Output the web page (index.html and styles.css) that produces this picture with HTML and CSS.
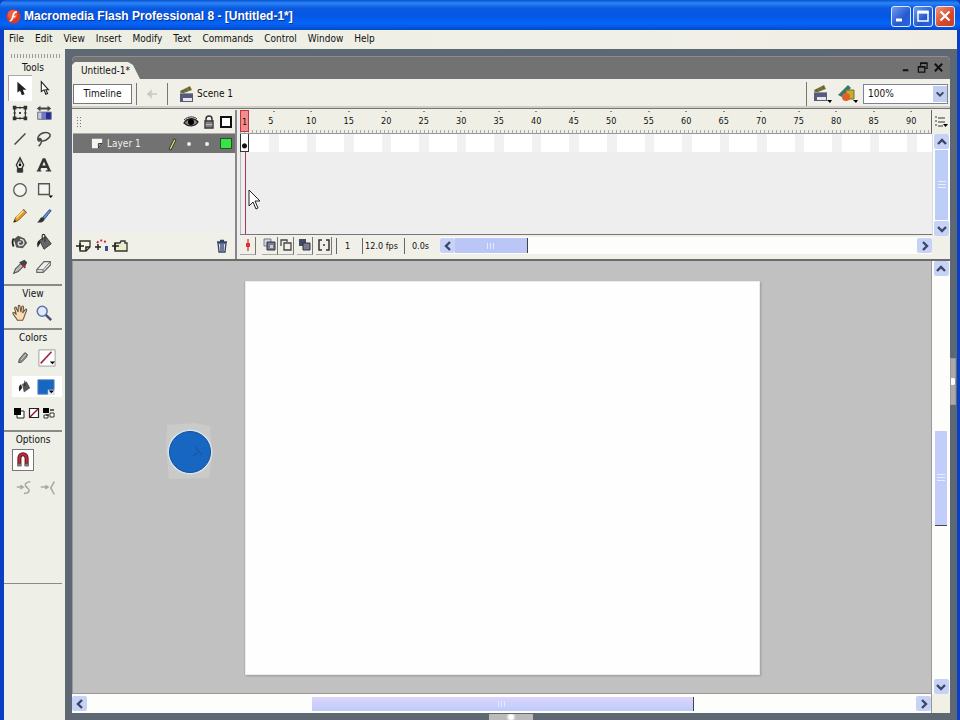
FILE: index.html
```html
<!DOCTYPE html>
<html lang="en">
<head>
<meta charset="utf-8">
<title>Macromedia Flash Professional 8 - [Untitled-1*]</title>
<link rel="stylesheet" href="styles.css">
</head>
<body>
<svg class="defs" aria-hidden="true">
  <symbol id="up" viewBox="0 0 12 12"><path d="M2 8l4-4 4 4" fill="none" stroke="#3c4668" stroke-width="2.4"/></symbol>
  <symbol id="down" viewBox="0 0 12 12"><path d="M2 4l4 4 4-4" fill="none" stroke="#3c4668" stroke-width="2.4"/></symbol>
  <symbol id="left" viewBox="0 0 12 12"><path d="M8 2L4 6l4 4" fill="none" stroke="#3c4668" stroke-width="2.4"/></symbol>
  <symbol id="right" viewBox="0 0 12 12"><path d="M4 2l4 4-4 4" fill="none" stroke="#3c4668" stroke-width="2.4"/></symbol>
  <symbol id="clap" viewBox="0 0 20 18"><path d="M3 6L13 1l2 4L4 9z" fill="#77763a"/><path d="M3 8h13v9H3z" fill="#555b78"/><path d="M6 13h9v3H6z" fill="#e4e7f2"/><path d="M3 8.500h13" stroke="#8a8fa8"/><path d="M5 5l2 3M8 4l2 3M12 2l1 3" stroke="#5c5b2c"/></symbol>
</svg>
<header class="titlebar">
  <svg class="logo" viewBox="0 0 16 16"><circle cx="8" cy="8" r="7.5" fill="#d93a20"/><circle cx="7" cy="6" r="5" fill="#ed6040"/><path d="M11.5 3C7 3 8 7 7 9.500c-.5 2-1.500 3-3 3M6.500 8H10" fill="none" stroke="#fff" stroke-width="1.800"/></svg>
  <h1>Macromedia Flash Professional 8 - [Untitled-1*]</h1>
  <div class="winbtns">
    <button aria-label="Minimize"><svg viewBox="0 0 18 18"><path d="M4 13h6" stroke="#fff" stroke-width="3"/></svg></button>
    <button aria-label="Maximize"><svg viewBox="0 0 18 18"><path d="M4 5.500h10V14H4z" fill="none" stroke="#fff" stroke-width="1.500"/><path d="M3.300 5h11.400" stroke="#fff" stroke-width="3"/></svg></button>
    <button class="close" aria-label="Close"><svg viewBox="0 0 18 18"><path d="M4.500 4.500l9 9m0-9l-9 9" stroke="#fff" stroke-width="2.200"/></svg></button>
  </div>
</header>
<div class="frame">
<nav class="menubar">
  <button>File</button><button>Edit</button><button>View</button><button>Insert</button><button>Modify</button><button>Text</button><button>Commands</button><button>Control</button><button>Window</button><button>Help</button>
</nav>
<div class="work">
<aside class="tools">
  <div class="grip"></div>
  <h2>Tools</h2>
  <div class="toolgrid">
    <button class="on" aria-label="Selection"><svg viewBox="0 0 20 20"><path d="M6 3v12l3-2 2 5 3-1-2-5h4z" fill="#222"/></svg></button>
    <button aria-label="Subselection"><svg viewBox="0 0 20 20"><path d="M7 3v11l3-2 2 5 2-1-2-4h3z" fill="#fff" stroke="#222" stroke-width="1.200"/></svg></button>
    <button aria-label="Free Transform"><svg viewBox="0 0 20 20"><path d="M4 4h12v12H4z" fill="none" stroke="#333" stroke-width="1.300"/><path d="M2 2h4v4H2zM14 2h4v4h-4zM2 14h4v4H2zM14 14h4v4h-4zM9 9h2v2H9zM9 3h2v2H9zM9 15h2v2H9zM3 9h2v2H3zM15 9h2v2h-2z" fill="#333"/></svg></button>
    <button aria-label="Gradient Transform"><svg viewBox="0 0 20 20"><path d="M3 9h4v8H3z" fill="#c5c8e6"/><path d="M7 9h5v8H7z" fill="#7078c0"/><path d="M12 9h6v8h-6z" fill="#25299c"/><path d="M3 9h15v8H3z" fill="none" stroke="#667"/><path d="M2 5l4-3v2h8V2l4 3-4 3V6H6v2z" fill="#444"/></svg></button>
    <button aria-label="Line"><svg viewBox="0 0 20 20"><path d="M4 16L16 4" stroke="#444" stroke-width="1.600"/></svg></button>
    <button aria-label="Lasso"><svg viewBox="0 0 20 20"><path d="M5 13C1 10 4 4 10 3c6-1 9 3 5 6-3 3-7 4-10 2-2-1 1-3 2 0 1 3-1 5-3 7" fill="none" stroke="#484848" stroke-width="1.700"/></svg></button>
    <button aria-label="Pen"><svg viewBox="0 0 20 20"><path d="M10 2l4 8-2 4H8l-2-4z" fill="#eee" stroke="#333" stroke-width="1.500"/><path d="M10 3v7M7 14h6v4H7z" fill="#333" stroke="#333"/><circle cx="10" cy="10" r="1.500"/></svg></button>
    <button aria-label="Text"><svg viewBox="0 0 20 20"><path d="M4 16.500L9.500 4h1L16 16.500M6.500 12h7" fill="none" stroke="#333" stroke-width="2.800"/><path d="M2 16.500h5M12 16.500h6" stroke="#333" stroke-width="1.300"/></svg></button>
    <button aria-label="Oval"><svg viewBox="0 0 20 20"><circle cx="10" cy="10" r="7" fill="#f4f4f0" stroke="#555" stroke-width="1.400"/></svg></button>
    <button aria-label="Rectangle"><svg viewBox="0 0 20 20"><path d="M4 3h12v12H4z" fill="#f4f4f0" stroke="#555" stroke-width="1.500"/><path d="M15 16h5l-2.500 3z"/></svg></button>
    <button aria-label="Pencil"><svg viewBox="0 0 20 20"><path d="M3 17l2-5 9-9 3 3-9 9z" fill="#e89c24" stroke="#76521c"/><path d="M6 12l8-8" stroke="#ffe07a" stroke-width="1.500"/><path d="M3 17l1-3 2 2z" fill="#222"/><path d="M13 3l1-1 4 4-1 1z" fill="#a56a60"/></svg></button>
    <button aria-label="Brush"><svg viewBox="0 0 20 20"><path d="M9 11l7-8 2 1-7 9z" fill="#5e92d8" stroke="#234b8c"/><path d="M2 17c3-1 3-5 6-6l3 2c-1 4-5 5-9 4z" fill="#333"/></svg></button>
    <button aria-label="Ink Bottle"><svg viewBox="0 0 20 20"><path d="M3 7l5-4 7 3 3 5-5 6-7-1z" fill="#555"/><path d="M10 7c5 0 6 6 1 7-4 0-4-5 0-4" fill="none" stroke="#ddd" stroke-width="1.500"/><path d="M3 6c-2 3-1 7 0 9" stroke="#222" stroke-width="2" fill="none"/></svg></button>
    <button aria-label="Paint Bucket"><svg viewBox="0 0 20 20"><path d="M5 8l7-4 6 8-8 6z" fill="#666" stroke="#333"/><path d="M5 8c-3 1-3 5-2 8l3-5z" fill="#222"/><path d="M11 10V3c0-2-3-2-3 0v5" fill="none" stroke="#333" stroke-width="1.300"/></svg></button>
    <button aria-label="Eyedropper"><svg viewBox="0 0 20 20"><path d="M3 17l2-5 6-6 3 3-6 6z" fill="#bbb" stroke="#555" stroke-width="1.200"/><path d="M9 5l6 6 1-2 2-4-3-3-4 2z" fill="#444"/><path d="M13 8l3 3" stroke="#b23" stroke-width="2"/></svg></button>
    <button aria-label="Eraser"><svg viewBox="0 0 20 20"><path d="M2 13l8-9h7v4l-8 8H2z" fill="#eee" stroke="#666" stroke-width="1.300"/><path d="M2 13h7l8-9M9 13v3" fill="none" stroke="#666"/></svg></button>
  </div>
  <section class="group view">
    <h2>View</h2>
    <div class="row">
      <button aria-label="Hand"><svg viewBox="0 0 20 20"><path d="M7 18c-1-3-5-6-5-8 1-1 2-1 4 2L4 5c0-2 2-2 2 0l2 4V3c0-2 2-2 2 0l1 6 1-6c1-1 2-1 2 1l-1 6 3-4c1-1 2 0 1 2-2 4-2 7-4 10z" fill="#f7dcb6" stroke="#6b543c" stroke-width="1.200"/></svg></button>
      <button aria-label="Zoom"><svg viewBox="0 0 20 20"><circle cx="8" cy="8" r="5.500" fill="#dfe9ff" stroke="#6173a6" stroke-width="1.700"/><path d="M12 12l6 6" stroke="#4b4f70" stroke-width="2.800"/></svg></button>
    </div>
  </section>
  <section class="group colors">
    <h2>Colors</h2>
    <div class="row">
      <button aria-label="Stroke tool"><svg viewBox="0 0 20 20"><path d="M5 15l1-4 6-7 3 2-1 3-6 6z" fill="#8a8a88" stroke="#555"/><path d="M8 12l5-6" stroke="#ddd"/></svg></button>
      <button class="swatch" aria-label="Stroke color"><svg viewBox="0 0 20 20"><path d="M1 1h18v18H1z" fill="#fff" stroke="#999"/><path d="M3 16L15 3" stroke="#a62443" stroke-width="1.800"/><path d="M13 14h6l-3 3z"/></svg></button>
    </div>
    <div class="row active">
      <button aria-label="Fill tool"><svg viewBox="0 0 20 20"><path d="M9 7l5-3 4 7-7 5z" fill="#555"/><path d="M8 7c-3 1-3 5-2 8l3-4z" fill="#222"/><path d="M12 9V3" stroke="#222"/></svg></button>
      <button aria-label="Fill color"><svg viewBox="0 0 20 20"><path d="M1 2h18v16H1z" fill="#1766c2" stroke="#5b84b0"/><path d="M12 13h8v6h-8z" fill="#dce6f2"/><path d="M13 14h6l-3 3z"/></svg></button>
    </div>
    <div class="row minis">
      <button aria-label="Black and white"><svg viewBox="0 0 12 12"><path d="M4 4h7v7H4z" fill="#fff" stroke="#222"/><path d="M1 1h7v7H1z"/></svg></button>
      <button aria-label="No color"><svg viewBox="0 0 12 12"><path d="M1.500 1.500h9v9h-9z" fill="#fff" stroke="#222" stroke-width="1.200"/><path d="M2 10l8-8" stroke="#912" stroke-width="1.500"/></svg></button>
      <button aria-label="Swap colors"><svg viewBox="0 0 12 12"><path d="M0 1h6v5H0z"/><path d="M1 8h4v3H1zM7 6h4v4H7z" fill="#fff" stroke="#333"/><path d="M7 3h4M6 8H3" stroke="#333" stroke-width="1.500"/></svg></button>
    </div>
  </section>
  <section class="group options">
    <h2>Options</h2>
    <div class="row">
      <button class="snap" aria-label="Snap to Objects"><svg viewBox="0 0 20 20"><path d="M6 17V8c0-6 8-6 8 0v9" fill="none" stroke="#5a1820" stroke-width="4.500"/><path d="M6 13V8c0-6 8-6 8 0v5" fill="none" stroke="#c22e36" stroke-width="2.200"/><path d="M4 14h4v3H4zM12 14h4v3h-4z" fill="#777"/></svg></button>
    </div>
    <div class="row">
      <button aria-label="Smooth"><svg viewBox="0 0 20 20"><path d="M2 9h6M6 7l3 2-3 2M17 3c-8 1-6 5-3 7 3 3 2 6-4 6" fill="none" stroke="#aaa9a3" stroke-width="1.700"/></svg></button>
      <button aria-label="Straighten"><svg viewBox="0 0 20 20"><path d="M2 9h7M7 7l3 2-3 2M17 3l-4 7 4 7" fill="none" stroke="#aaa9a3" stroke-width="1.700"/></svg></button>
    </div>
  </section>
  <div class="group rest"></div>
</aside>
<main class="doc">
  <div class="tabs">
    <button class="tab">Untitled-1*</button>
    <div class="docbtns">
      <button aria-label="Minimize document"><svg viewBox="0 0 12 12"><path d="M2 9h6" stroke="#111" stroke-width="2"/></svg></button>
      <button aria-label="Restore document"><svg viewBox="0 0 12 12"><path d="M4 4V1h7v6H9M3.500 1.500h8M1.500 5h7v6h-7zM1 5.500h8" fill="none" stroke="#111" stroke-width="1.400"/></svg></button>
      <button aria-label="Close document"><svg viewBox="0 0 12 12"><path d="M2 2l8 8m0-8l-8 8" stroke="#111" stroke-width="2.200"/></svg></button>
    </div>
  </div>
  <div class="editbar">
    <button class="tl">Timeline</button>
    <button class="back" aria-label="Back"><svg viewBox="0 0 16 12"><path d="M3 6h10M7 3v6L4 6z" fill="#c9c9c2" stroke="#c9c9c2" stroke-width="1.500"/></svg></button>
    <svg class="clap" viewBox="0 0 20 18"><use href="#clap"/></svg>
    <span>Scene 1</span>
    <div class="editright">
      <button aria-label="Edit Scene"><svg viewBox="0 0 22 20"><use href="#clap" width="20" height="18"/><path d="M16 16h5l-2 3z"/></svg></button>
      <button aria-label="Edit Symbols"><svg viewBox="0 0 22 20"><path d="M1 11L11 1l3 3-9 9z" fill="#34796b"/><path d="M9 6h8v9H9z" fill="#c7ad2d" stroke="#75702a"/><circle cx="9" cy="13" r="4" fill="#e0602c"/><path d="M16 16h5l-2 3z"/></svg></button>
      <div class="zoom"><select aria-label="Zoom"><option>100%</option></select><svg viewBox="0 0 12 12"><use href="#down"/></svg></div>
    </div>
  </div>
  <section class="timeline">
    <div class="layers">
      <div class="lhead"><i class="vgrip"></i>
        <svg class="eye" viewBox="0 0 16 14"><path d="M1 8c3-5 10-6 14-1-3 5-10 5-14 1z" fill="#888" stroke="#222" stroke-width="1.300"/><circle cx="8" cy="7" r="3"/><path d="M1 5c4-4 10-4 13-1" fill="none" stroke="#333"/></svg>
        <svg viewBox="0 0 14 14"><path d="M4 6V4c0-4 6-4 6 0v2" fill="none" stroke="#333" stroke-width="1.500"/><path d="M3 6h8v7H3z" fill="#bbb" stroke="#333" stroke-width="1.400"/><path d="M4 8h6M4 11h6" stroke="#444"/></svg>
        <svg viewBox="0 0 14 14"><path d="M2 2h10v10H2z" fill="#fff" stroke="#111" stroke-width="2"/></svg>
      </div>
      <div class="layer">
        <svg class="page" viewBox="0 0 14 14"><path d="M1 2h11v6l-4 4H1z" fill="#f5f5ee"/><path d="M12 7H8v5z" fill="#999" stroke="#333"/></svg>
        <span>Layer 1</span>
        <svg class="pen" viewBox="0 0 14 14"><path d="M4 12l5-10 2 1-5 10z" fill="#e8dc86" stroke="#33331f"/></svg>
        <i class="dot"></i><i class="dot"></i><i class="green"></i>
      </div>
      <div class="lfoot">
        <button aria-label="Insert Layer"><svg viewBox="0 0 18 14"><path d="M5 2h10v6l-4 4H5z" fill="#f6f5df" stroke="#333" stroke-width="1.300"/><path d="M15 8h-4v4M1 7h8M5 4v7" fill="none" stroke="#222" stroke-width="1.500"/></svg></button>
        <button aria-label="Add Motion Guide"><svg viewBox="0 0 18 14"><path d="M4 4c3-4 8-3 10 1" stroke="#bd333f" stroke-width="2" stroke-dasharray="2 2" fill="none"/><path d="M2 8h6M5 5v6" stroke="#222" stroke-width="1.500"/><path d="M12 7h3v5h-3z" fill="#345094"/></svg></button>
        <button aria-label="Insert Layer Folder"><svg viewBox="0 0 18 14"><path d="M4 4h5l1-2h4v2h2v8H4z" fill="#efeccc" stroke="#333" stroke-width="1.300"/><path d="M1 7h7M4 4v7" stroke="#222" stroke-width="1.500"/></svg></button>
        <button class="trash" aria-label="Delete Layer"><svg viewBox="0 0 14 14"><path d="M3 4h8l-1 9H4z" fill="#dde" stroke="#344268" stroke-width="1.300"/><path d="M2 3h10M5 1.500h4M6 5v7M8 5v7" stroke="#344268" stroke-width="1.300"/></svg></button>
      </div>
    </div>
    <div class="frames">
      <div class="ruler"><b>1</b><span>5</span><span>10</span><span>15</span><span>20</span><span>25</span><span>30</span><span>35</span><span>40</span><span>45</span><span>50</span><span>55</span><span>60</span><span>65</span><span>70</span><span>75</span><span>80</span><span>85</span><span>90</span></div>
      <div class="track"><i class="key"></i><i></i><i></i><i></i><i></i><i></i><i></i><i></i><i></i><i></i><i></i><i></i><i></i><i></i><i></i><i></i><i></i><i></i><i></i></div>
      <div class="blank"><i class="playline"></i></div>
      <div class="ffoot">
        <button aria-label="Center Frame"><svg viewBox="0 0 14 14"><path d="M7 1v12" stroke="#d33" stroke-width="1.300"/><path d="M5 5h4v4H5z" fill="#d33"/></svg></button>
        <button class="gapb" aria-label="Onion Skin"><svg viewBox="0 0 14 14"><path d="M1 1h7v7H1z" fill="#d6d8e2" stroke="#777b8c"/><path d="M4 4h8v8H4z" fill="#777c94" stroke="#333"/><path d="M7 7h3v3H7z" fill="#ccd"/></svg></button>
        <button aria-label="Onion Skin Outlines"><svg viewBox="0 0 14 14"><path d="M2 8V2h6v2M5 5h7v7H5z" fill="none" stroke="#444" stroke-width="1.300"/></svg></button>
        <button class="gapc" aria-label="Edit Multiple Frames"><svg viewBox="0 0 14 14"><path d="M1 1h7v7H1z" fill="#444b64"/><path d="M5 5h7v7H5z" fill="#777c94" stroke="#333"/></svg></button>
        <button class="gapc" aria-label="Modify Onion Markers"><svg viewBox="0 0 14 14"><path d="M5 2H2v10h3M9 2h3v10H9M6 7h2" fill="none" stroke="#333" stroke-width="1.500"/></svg></button>
        <output class="n">1</output><output class="fps">12.0 fps</output><output class="sec">0.0s</output>
        <div class="hbar tlh"><button aria-label="Scroll left"><svg><use href="#left"/></svg></button><i class="thumb"></i><button class="end" aria-label="Scroll right"><svg><use href="#right"/></svg></button></div>
      </div>
    </div>
    <div class="tside">
      <button class="opt" aria-label="Frame View"><svg viewBox="0 0 14 14"><path d="M1 2h2M1 6h2M1 10h2M4 3h7M4 7h7M4 11h5" stroke="#333" stroke-width="1.200"/><path d="M9 9h5l-2.500 3z"/></svg></button>
      <div class="vbar"><button aria-label="Scroll up"><svg><use href="#up"/></svg></button><i class="thumb"></i><button class="end" aria-label="Scroll down"><svg><use href="#down"/></svg></button></div>
    </div>
  </section>
  <section class="stagewrap">
    <div class="paste">
      <div class="stage"></div>
      <svg class="ball" viewBox="0 0 50 60"><path d="M2 4L30 2l15 3 2 30-3 22-40 1-3-30z" fill="#cacac8"/><circle cx="25" cy="31" r="22.500" fill="#d3e2ee"/><circle cx="25" cy="31" r="20.500" fill="#1766c2" stroke="#174f92"/><path d="M30 26l7 8M28 35l5-3" stroke="#174f92"/></svg>
    </div>
    <div class="vbar sv"><button aria-label="Scroll stage up"><svg><use href="#up"/></svg></button><i class="thumb"></i><button class="end" aria-label="Scroll stage down"><svg><use href="#down"/></svg></button></div>
    <div class="hbar sh"><button aria-label="Scroll stage left"><svg><use href="#left"/></svg></button><i class="thumb"></i><button class="end" aria-label="Scroll stage right"><svg><use href="#right"/></svg></button></div>
    <div class="corner"></div>
  </section>
</main>
<div class="rightdock"><i></i></div>
<div class="bottomdock"><i></i></div>
</div>
</div>
<svg class="cursor" viewBox="0 0 12 21"><path d="M1 1v16l4-4 3 7 2-1-3-7h5z" fill="#fff" stroke="#222"/></svg>
</body>
</html>
```
FILE: styles.css
```css
* { box-sizing: border-box; }
html, body { margin: 0; height: 100%; }
body {
  display: flex; flex-direction: column; overflow: hidden; position: relative;
  font: 10px/12px "DejaVu Sans Condensed", "Liberation Sans", sans-serif;
  color: #111; background: #0a3fc4;
}
button { font: inherit; color: inherit; border: 0; padding: 0; background: none; display: flex; align-items: center; justify-content: center; }
svg { display: block; flex: none; }
.defs { position: absolute; width: 0; height: 0; }

.titlebar {
  height: 30px; flex: none; display: flex; align-items: center; padding: 2px 5px 0 6px;
  background: linear-gradient(#0a4fd0, #2a86f8 3px, #0b5ae0 8px, #0458e6 16px, #0564f8 24px, #0448c8);
  border-radius: 6px 6px 0 0;
}
.logo { width: 15px; height: 15px; }
h1 { margin: 0 0 0 3px; font: bold 12px/16px "Liberation Sans", sans-serif; color: #fff; white-space: nowrap; text-shadow: 1px 1px #0a3590; }
.winbtns { margin-left: auto; display: flex; gap: 2px; }
.winbtns button { width: 20px; height: 21px; border: 1px solid #dfe9ff; border-radius: 3px; background: linear-gradient(135deg, #6f9cf4, #2459d0 60%, #2c66e0); }
.winbtns .close { background: linear-gradient(135deg, #ef9575, #d9472a 60%, #c8401f); }
.winbtns svg { width: 18px; height: 18px; }

.frame { flex: 1; min-height: 0; display: flex; flex-direction: column; margin: 0 3px 0 4px; background: #5d6873; }
.menubar { height: 19px; flex: none; display: flex; gap: 11px; padding: 0 0 2px 5px; background: linear-gradient(90deg, #edeee2, #f0f0e8 60%, #f2ede4); }
.work { flex: 1; min-height: 0; display: grid; grid-template-columns: 61px minmax(0, 1fr) 7px; grid-template-rows: minmax(0, 1fr) 7px; }

.tools { grid-row: 1 / 3; background: #eeefe7; padding: 5px 3px 0 0; overflow: hidden; display: flex; flex-direction: column; }
.grip { height: 4px; margin: 0 0 0 6px; background: radial-gradient(circle, #777 1px, transparent 1px) 0 0 / 3px 2px; flex: none; opacity: .7; }
h2 { margin: 0; font-size: 10px; line-height: 12px; font-weight: normal; text-align: center; }
.tools > h2 { padding-top: 4px; }
.toolgrid { height: 205px; margin: 1px 0 0 4px; display: grid; grid-template-columns: 24px 24px; grid-auto-rows: 1fr; }
.tools svg { width: 18px; height: 18px; }
.on { background: #fff; border-left: 1px solid #b99; border-top: 1px solid #aaa; }
.group { border-top: 2px solid #8b8b86; flex: none; }
.view { margin-top: 4px; height: 44px; padding-top: 2px; }
.colors { height: 102px; padding-top: 2px; }
.options { height: 153px; padding-top: 2px; }
.rest { border-top-width: 1px; }
.row { display: flex; padding-left: 4px; height: 26px; }
.row button { width: 24px; }
.colors .row { padding-left: 7px; height: 28px; }
.colors .active { background: #fff; height: 21px; margin: 4px 0 4px 8px; padding-left: 0; }
.colors .active button:first-child { width: 22px; }
.colors .minis { gap: 3px; padding-left: 9px; height: 24px; }
.minis button { width: 12px; }
.tools .minis svg { width: 12px; height: 12px; }
.options .row { padding-left: 8px; margin-top: 3px; height: 24px; }
.options .snap { width: 22px; height: 22px; background: #fff; border: 1px solid #777; }

.doc { margin: 7px 0 0 7px; display: flex; flex-direction: column; background: #f0f0e9; border-radius: 5px 5px 0 0; overflow: hidden; min-width: 0; }
.tabs { height: 23px; flex: none; display: flex; justify-content: space-between; background: #727272; border-top: 1px solid #8e8e8e; padding-top: 5px; }
.tab { width: 68px; padding: 1px 7px 0 9px; background: #f0f0e9; clip-path: polygon(0 3px, 3px 0, 56px 0, 61px 3px, 68px 100%, 0 100%); justify-content: flex-start; }
.docbtns { display: flex; gap: 5px; padding-right: 6px; align-items: flex-start; }
.docbtns svg { width: 11px; height: 11px; }
.editbar { height: 30px; flex: none; display: flex; align-items: center; border-bottom: 1px solid #77776f; box-shadow: inset 0 -2px #cfcfc8; padding: 1px 2px 0 1px; }
.tl { width: 59px; height: 20px; background: #fff; border: 1px solid #777; }
.back { width: 32px; height: 22px; margin: 0 9px 0 4px; border: solid #777; border-width: 0 1px; }
.back svg { width: 16px; height: 12px; }
.clap { width: 20px; height: 18px; }
.editright { margin-left: auto; display: flex; align-items: center; border-left: 1px solid #777; padding-left: 4px; height: 24px; gap: 4px; }
.editright > button svg { width: 22px; height: 20px; }
.zoom { display: flex; position: relative; width: 85px; }
.zoom select { appearance: none; width: 100%; height: 20px; border: 1px solid #77849a; border-radius: 0; background: #fff; font: inherit; padding: 0 4px; color: inherit; }
.zoom svg { position: absolute; right: 1px; top: 2px; width: 14px; height: 16px; padding: 2px; background: #c3cdf0; }

.timeline { height: 152px; flex: none; display: grid; grid-template-columns: 165px minmax(0, 1fr) 18px; border-bottom: 2px solid #6b6b6b; padding-top: 1px; background: #eee; }
.layers { display: flex; flex-direction: column; border-right: 2px solid #888; padding-left: 1px; }
.lhead { height: 24px; display: flex; align-items: center; justify-content: flex-end; gap: 3px; padding-right: 2px; background: #f0f0e9; border-bottom: 1px solid #aaa; }
.lhead svg { width: 14px; height: 14px; }
.lhead .eye { width: 16px; }
.vgrip { width: 5px; height: 12px; margin: 0 auto 0 3px; background: radial-gradient(circle, #777 1px, transparent 1px) 0 0 / 3px 3px; }
.layer { height: 19px; display: flex; align-items: center; background: #727272; color: #eee; padding: 0 3px 0 18px; }
.layer .page { width: 13px; height: 13px; margin-right: 3px; }
.layer .pen { width: 14px; height: 14px; margin-left: auto; margin-right: 8px; }
.dot { width: 4px; height: 4px; border-radius: 2px; background: #eee; margin-right: 14px; }
.green { width: 12px; height: 11px; background: #3be04c; border: 1px solid #165c1c; margin-left: -3px; }
.lfoot { height: 26px; margin-top: auto; display: flex; align-items: center; background: #f0f0e9; padding: 0 6px 1px 2px; }
.lfoot svg { width: 18px; height: 14px; }
.lfoot .trash { margin-left: auto; }
.lfoot .trash svg { width: 14px; }
.frames { display: flex; flex-direction: column; padding-left: 3px; min-width: 0; }
.ruler, .track { display: grid; grid-template-columns: 15px repeat(18, minmax(0, 1fr)); padding-right: 1px; }
.ruler { height: 24px; line-height: 22px; text-align: center; background: repeating-linear-gradient(90deg, #aaa 0 1px, transparent 1px 4px) 0 100% / 100% 3px no-repeat #efefe5; border-right: 1px solid #666; border-bottom: 1px solid #999; font-size: 9px; }
.ruler span { background: radial-gradient(circle, #888 1px, transparent 1px) 50% 0 / 8px 3px no-repeat; }
.ruler span:nth-child(2) { padding-right: 6px; }
.ruler b { width: 9px; height: 22px; background: #f48c8c; border: 1px solid #b23b45; line-height: 22px; font-weight: normal; }
.track { height: 18px; background: #fff; }
.track i { background: linear-gradient(90deg, transparent 38%, #f1f1f1 38% 62%, transparent 62%); }
.track .key { width: 9px; background: radial-gradient(circle at 50% 70%, #111 0 2px, transparent 3px) #fff; border: 1px solid #333; border-top: 0; }
.blank { flex: 1; padding-left: 4px; background: #eee; border-left: 1px solid #bbb; display: flex; }
.playline { width: 1px; background: #a23a55; }
.ffoot { height: 25px; flex: none; display: flex; align-items: center; background: #f0f0e9; border-top: 1px solid #777; padding-bottom: 3px; font-size: 9px; }
.ffoot > button { width: 16px; height: 18px; border-right: 1px solid #777; border-bottom: 1px solid #aaa; }
.ffoot > button svg { width: 14px; height: 14px; }
.gapb { margin-left: 6px; }
.gapc { margin-left: 3px; }
output { height: 16px; line-height: 16px; border-left: 1px solid #666; text-align: center; white-space: nowrap; }
.n { width: 22px; margin-left: 4px; }
.fps { width: 38px; margin-left: 4px; }
.sec { width: 32px; margin-left: 4px; }
.hbar, .vbar { display: flex; background: #fdfdfc; }
.hbar button, .vbar button { flex: none; width: 15px; height: 15px; background: #c7d3f6; border-radius: 2px; }
.hbar svg, .vbar svg { width: 12px; height: 12px; }
.hbar { align-items: center; }
.tlh { flex: 1; height: 17px; margin-left: 4px; }
.tlh .thumb { width: 73px; height: 15px; border-right: 1px solid #444; background: repeating-linear-gradient(90deg, #e4e9ff 0 1px, transparent 1px 3px) 50% 50% / 9px 6px no-repeat #b9c6f6; }
.hbar .end { margin-left: auto; }
.vbar { flex-direction: column; align-items: center; }
.vbar .end { margin-top: auto; }
.tside { display: flex; flex-direction: column; background: #f0f0e9; padding-bottom: 23px; }
.opt { height: 24px; flex: none; }
.opt svg { width: 14px; height: 14px; }
.tside .vbar { flex: 1; border-left: 1px solid #ddd; }
.tside .thumb { flex: 1; width: 13px; margin: 1px 0; background: repeating-linear-gradient(#e8edff 0 1px, transparent 1px 3px) 50% 50% / 8px 9px no-repeat #bccdf8; }

.stagewrap { flex: 1; min-height: 0; display: grid; grid-template-columns: minmax(0, 1fr) 18px; grid-template-rows: minmax(0, 1fr) 19px; }
.paste { position: relative; display: flex; padding: 20px 171px 18px 172px; background: #c1c1c1; border: solid #999; border-width: 0 1px 1px; }
.stage { flex: 1; background: #fefefe; border: 1px solid #ececec; box-shadow: 1px 1px 2px #999, -1px 0 #b2b2b2; }
.ball { position: absolute; left: 92px; top: 160px; width: 50px; height: 60px; }
.sv .thumb { height: 22%; width: 12px; margin-top: 155px; border-bottom: 1px solid #445; background: repeating-linear-gradient(#e8edff 0 1px, transparent 1px 3px) 50% 50% / 8px 9px no-repeat #c3cdfa; }
.sh { padding: 2px 0; border-right: 1px solid #999; }
.sh .thumb { width: 382px; height: 14px; margin-left: 225px; border-right: 1px solid #444; background: repeating-linear-gradient(90deg, #e4e9ff 0 1px, transparent 1px 3px) 50% 50% / 9px 6px no-repeat, linear-gradient(#dcd5fb, #bdcbfa); }
.corner { background: #f0f0e4; }
.rightdock { display: flex; align-items: center; }
.rightdock i { width: 6px; height: 47px; background: radial-gradient(circle at 40% 50%, #fff 0 3px, #aaa 4px); border: 1px solid #999; }
.bottomdock { grid-column: 2 / 4; display: flex; justify-content: center; padding-top: 1px; }
.bottomdock i { width: 44px; height: 6px; background: radial-gradient(circle, #fff 0 2px, #bbb 5px); }
.cursor { position: absolute; left: 248px; top: 189px; width: 12px; height: 21px; }
```
